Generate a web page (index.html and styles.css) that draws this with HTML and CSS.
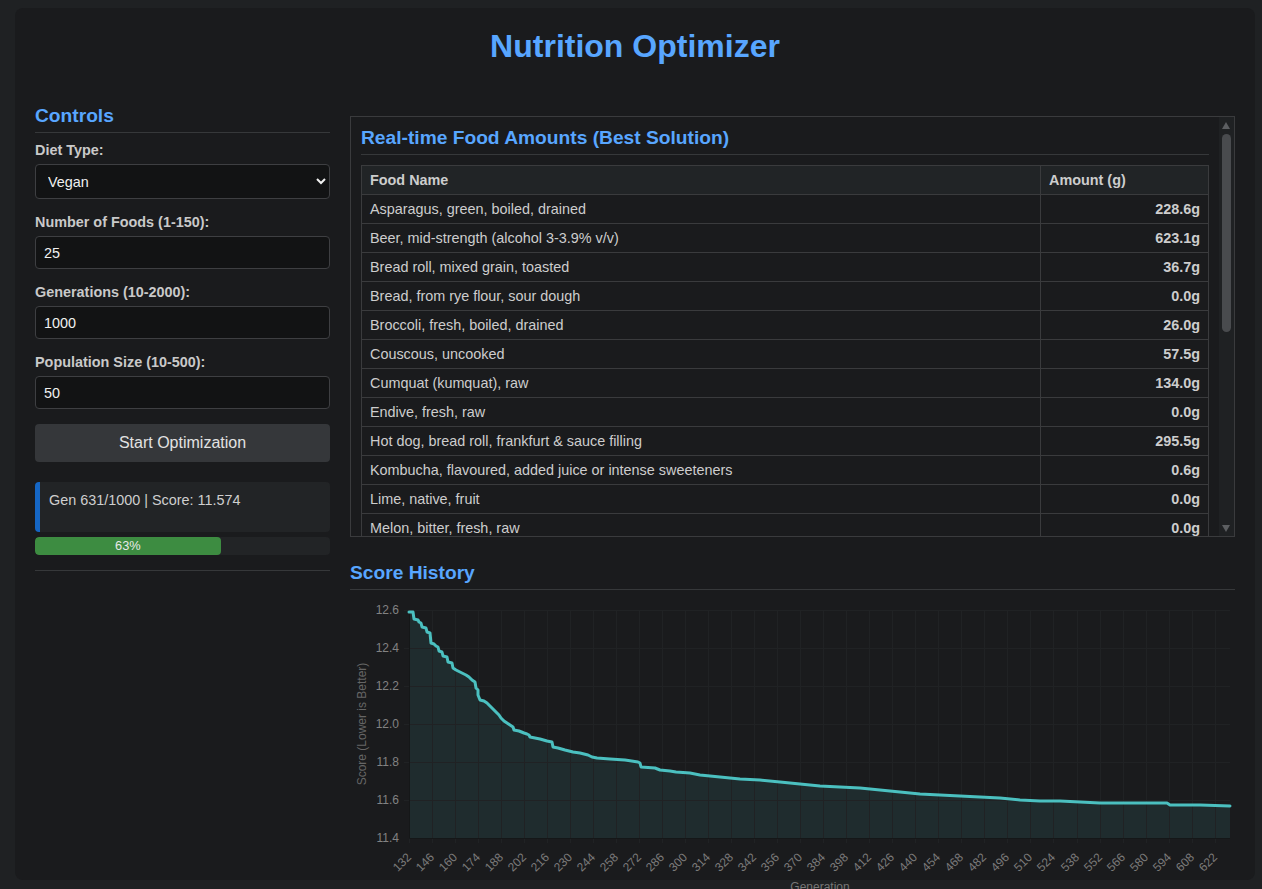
FILE: index.html
```html
<!DOCTYPE html>
<html lang="en">
<head>
<meta charset="utf-8">
<title>Nutrition Optimizer</title>
<link rel="stylesheet" href="styles.css">
</head>
<body>
<div class="app">
  <h1 class="app-title">Nutrition Optimizer</h1>
  <div class="layout">
    <aside class="controls">
      <h2 class="section-title controls-title">Controls</h2>
      <div class="field">
        <label class="field-label" for="diet">Diet Type:</label>
        <select id="diet" class="field-input field-select">
          <option>Vegan</option>
          <option>Vegetarian</option>
          <option>Omnivore</option>
        </select>
      </div>
      <div class="field">
        <label class="field-label" for="foods">Number of Foods (1-150):</label>
        <input id="foods" class="field-input" type="text" value="25">
      </div>
      <div class="field">
        <label class="field-label" for="gens">Generations (10-2000):</label>
        <input id="gens" class="field-input" type="text" value="1000">
      </div>
      <div class="field">
        <label class="field-label" for="pop">Population Size (10-500):</label>
        <input id="pop" class="field-input" type="text" value="50">
      </div>
      <button class="start-btn" type="button">Start Optimization</button>
      <div class="status">Gen 631/1000 | Score: 11.574</div>
      <div class="progress"><div class="progress-fill" style="width:63%">63%</div></div>
    </aside>

    <main class="results">
      <section class="food-panel">
        <h2 class="section-title">Real-time Food Amounts (Best Solution)</h2>
        <table class="food-table">
          <thead>
            <tr><th class="col-name">Food Name</th><th class="col-amount">Amount (g)</th></tr>
          </thead>
          <tbody>
            <tr><td>Asparagus, green, boiled, drained</td><td class="amount">228.6g</td></tr>
            <tr><td>Beer, mid-strength (alcohol 3-3.9% v/v)</td><td class="amount">623.1g</td></tr>
            <tr><td>Bread roll, mixed grain, toasted</td><td class="amount">36.7g</td></tr>
            <tr><td>Bread, from rye flour, sour dough</td><td class="amount">0.0g</td></tr>
            <tr><td>Broccoli, fresh, boiled, drained</td><td class="amount">26.0g</td></tr>
            <tr><td>Couscous, uncooked</td><td class="amount">57.5g</td></tr>
            <tr><td>Cumquat (kumquat), raw</td><td class="amount">134.0g</td></tr>
            <tr><td>Endive, fresh, raw</td><td class="amount">0.0g</td></tr>
            <tr><td>Hot dog, bread roll, frankfurt &amp; sauce filling</td><td class="amount">295.5g</td></tr>
            <tr><td>Kombucha, flavoured, added juice or intense sweeteners</td><td class="amount">0.6g</td></tr>
            <tr><td>Lime, native, fruit</td><td class="amount">0.0g</td></tr>
            <tr><td>Melon, bitter, fresh, raw</td><td class="amount">0.0g</td></tr>
            <tr><td>Mushroom, button, raw</td><td class="amount">0.0g</td></tr>
            <tr><td>Oats, rolled, uncooked</td><td class="amount">88.2g</td></tr>
            <tr><td>Orange juice, commercial</td><td class="amount">0.0g</td></tr>
            <tr><td>Peanut butter, smooth</td><td class="amount">12.4g</td></tr>
            <tr><td>Potato, peeled, boiled</td><td class="amount">145.3g</td></tr>
            <tr><td>Rice, brown, boiled</td><td class="amount">210.8g</td></tr>
            <tr><td>Soy milk, regular fat</td><td class="amount">0.0g</td></tr>
            <tr><td>Spinach, baby, raw</td><td class="amount">64.7g</td></tr>
            <tr><td>Tofu, firm, plain</td><td class="amount">118.9g</td></tr>
            <tr><td>Tomato, common, raw</td><td class="amount">0.0g</td></tr>
            <tr><td>Walnut, raw</td><td class="amount">8.3g</td></tr>
            <tr><td>Wine, red</td><td class="amount">0.0g</td></tr>
            <tr><td>Zucchini, fresh, raw</td><td class="amount">0.0g</td></tr>
          </tbody>
        </table>
        <div class="scrollbar" aria-hidden="true">
          <span class="scroll-arrow scroll-up"></span>
          <span class="scroll-thumb"></span>
          <span class="scroll-arrow scroll-down"></span>
        </div>
      </section>

      <section class="chart-section">
        <h2 class="section-title">Score History</h2>
        <svg class="chart" width="885" height="295" viewBox="350 600 885 295" xmlns="http://www.w3.org/2000/svg">
          <path class="area" d="M409,612 L413,612 L414,619 L418,620 L419,622 L421,623 L422,627 L426,628 L427,632 L430,633 L431,643 L434,644 L436,646 L438,647 L439,651 L442,652 L443,656 L447,657 L448,662 L452,663 L453,668 L456,670 L462,673 L466,675 L469,677 L472,680 L475,682 L476,688 L478,690 L478,695 L480,700 L484,701 L487,703 L490,706 L493,709 L496,712 L499,715 L501,718 L504,721 L507,723 L510,725 L513,727 L514,730 L519,731 L524,733 L527,734 L529,735 L530,737 L535,738 L540,739 L547,741 L552,742 L553,747 L558,748 L565,750 L573,752 L580,753 L588,755 L592,757 L597,758 L610,759 L625,760 L638,762 L640,763 L641,767 L655,768 L660,770 L670,771 L676,772 L690,773 L700,775 L720,777 L740,779 L760,780 L780,782 L800,784 L820,786 L840,787 L860,788 L880,790 L900,792 L920,794 L940,795 L960,796 L980,797 L1000,798 L1020,800 L1040,801 L1060,801 L1080,802 L1100,803 L1130,803 L1167,803 L1170,805 L1200,805 L1230,806 L1230,838 L409,838 Z"/>
          <g class="grid">
            <path d="M409.5,610 V843 M432.5,610 V843 M455.5,610 V843 M478.5,610 V843 M501.5,610 V843 M524.5,610 V843 M547.5,610 V843 M570.5,610 V843 M593.5,610 V843 M616.5,610 V843 M639.5,610 V843 M662.5,610 V843 M685.5,610 V843 M708.5,610 V843 M731.5,610 V843 M754.5,610 V843 M777.5,610 V843 M800.5,610 V843 M823.5,610 V843 M846.5,610 V843 M869.5,610 V843 M892.5,610 V843 M915.5,610 V843 M938.5,610 V843 M961.5,610 V843 M984.5,610 V843 M1007.5,610 V843 M1030.5,610 V843 M1053.5,610 V843 M1077.5,610 V843 M1100.5,610 V843 M1123.5,610 V843 M1146.5,610 V843 M1169.5,610 V843 M1192.5,610 V843 M1215.5,610 V843"/>
            <path d="M404,610.5 H1230 M404,648.5 H1230 M404,686.5 H1230 M404,724.5 H1230 M404,762.5 H1230 M404,800.5 H1230"/>
          </g>
          <path class="axis" d="M409.5,610 V838.5 H1230"/>
          <path class="line" d="M409,612 L413,612 L414,619 L418,620 L419,622 L421,623 L422,627 L426,628 L427,632 L430,633 L431,643 L434,644 L436,646 L438,647 L439,651 L442,652 L443,656 L447,657 L448,662 L452,663 L453,668 L456,670 L462,673 L466,675 L469,677 L472,680 L475,682 L476,688 L478,690 L478,695 L480,700 L484,701 L487,703 L490,706 L493,709 L496,712 L499,715 L501,718 L504,721 L507,723 L510,725 L513,727 L514,730 L519,731 L524,733 L527,734 L529,735 L530,737 L535,738 L540,739 L547,741 L552,742 L553,747 L558,748 L565,750 L573,752 L580,753 L588,755 L592,757 L597,758 L610,759 L625,760 L638,762 L640,763 L641,767 L655,768 L660,770 L670,771 L676,772 L690,773 L700,775 L720,777 L740,779 L760,780 L780,782 L800,784 L820,786 L840,787 L860,788 L880,790 L900,792 L920,794 L940,795 L960,796 L980,797 L1000,798 L1020,800 L1040,801 L1060,801 L1080,802 L1100,803 L1130,803 L1167,803 L1170,805 L1200,805 L1230,806"/>
          <g class="y-ticks">
            <text x="399" y="614">12.6</text>
            <text x="399" y="652">12.4</text>
            <text x="399" y="690">12.2</text>
            <text x="399" y="728">12.0</text>
            <text x="399" y="766">11.8</text>
            <text x="399" y="804">11.6</text>
            <text x="399" y="842">11.4</text>
          </g>
          <text class="axis-title" transform="translate(366,724) rotate(-90)">Score (Lower is Better)</text>
          <g class="x-ticks">
            <text transform="translate(412,858) rotate(-45)">132</text>
            <text transform="translate(435,858) rotate(-45)">146</text>
            <text transform="translate(458,858) rotate(-45)">160</text>
            <text transform="translate(481,858) rotate(-45)">174</text>
            <text transform="translate(504,858) rotate(-45)">188</text>
            <text transform="translate(527,858) rotate(-45)">202</text>
            <text transform="translate(550,858) rotate(-45)">216</text>
            <text transform="translate(573,858) rotate(-45)">230</text>
            <text transform="translate(596,858) rotate(-45)">244</text>
            <text transform="translate(619,858) rotate(-45)">258</text>
            <text transform="translate(642,858) rotate(-45)">272</text>
            <text transform="translate(665,858) rotate(-45)">286</text>
            <text transform="translate(688,858) rotate(-45)">300</text>
            <text transform="translate(711,858) rotate(-45)">314</text>
            <text transform="translate(734,858) rotate(-45)">328</text>
            <text transform="translate(757,858) rotate(-45)">342</text>
            <text transform="translate(780,858) rotate(-45)">356</text>
            <text transform="translate(803,858) rotate(-45)">370</text>
            <text transform="translate(826,858) rotate(-45)">384</text>
            <text transform="translate(849,858) rotate(-45)">398</text>
            <text transform="translate(872,858) rotate(-45)">412</text>
            <text transform="translate(895,858) rotate(-45)">426</text>
            <text transform="translate(918,858) rotate(-45)">440</text>
            <text transform="translate(941,858) rotate(-45)">454</text>
            <text transform="translate(964,858) rotate(-45)">468</text>
            <text transform="translate(987,858) rotate(-45)">482</text>
            <text transform="translate(1010,858) rotate(-45)">496</text>
            <text transform="translate(1033,858) rotate(-45)">510</text>
            <text transform="translate(1056,858) rotate(-45)">524</text>
            <text transform="translate(1080,858) rotate(-45)">538</text>
            <text transform="translate(1103,858) rotate(-45)">552</text>
            <text transform="translate(1126,858) rotate(-45)">566</text>
            <text transform="translate(1149,858) rotate(-45)">580</text>
            <text transform="translate(1172,858) rotate(-45)">594</text>
            <text transform="translate(1195,858) rotate(-45)">608</text>
            <text transform="translate(1218,858) rotate(-45)">622</text>
          </g>
          <text class="axis-title x-title" x="820" y="891">Generation</text>
        </svg>
      </section>
    </main>
  </div>
</div>
</body>
</html>
```

FILE: styles.css
```css
html {
  color-scheme: dark;
  background: #1f2123;
}

body {
  margin: 0;
  padding: 8px 0 30px 15px;
  font-family: "Liberation Sans", Arial, sans-serif;
  font-size: 16px;
  color: #d0d0d0;
  background: #1f2123;
}

.app {
  width: 1240px;
  height: 872px;
  box-sizing: border-box;
  padding: 20px 20px 0;
  background: #1a1b1d;
  border-radius: 8px;
}

.app-title {
  margin: 0 0 40px;
  font-size: 32px;
  line-height: 37px;
  font-weight: bold;
  text-align: center;
  color: #58a6ff;
}

.layout {
  display: grid;
  grid-template-columns: 295px 1fr;
  column-gap: 20px;
  align-items: start;
}

.section-title {
  margin: 0 0 10px;
  padding-bottom: 5px;
  border-bottom: 1px solid #36383a;
  font-size: 19.2px;
  line-height: 22px;
  font-weight: bold;
  color: #58a6ff;
}

.controls-title {
  margin-bottom: 9px;
}

/* Controls */
.controls {
  padding-bottom: 15px;
  border-bottom: 1px solid #36383a;
}

.field {
  margin-bottom: 15px;
}

.field-label {
  display: block;
  margin-bottom: 5px;
  font-size: 14.4px;
  line-height: 17px;
  font-weight: bold;
  color: #c9c9c9;
}

.field-input {
  display: block;
  width: 100%;
  box-sizing: border-box;
  height: 33px;
  padding: 0 8px;
  font-family: "Liberation Sans", Arial, sans-serif;
  font-size: 14.4px;
  color: #f0f0f0;
  background: #121314;
  border: 1px solid #3e3f42;
  border-radius: 4px;
  outline: none;
}

.field-select {
  height: 35px;
  padding: 0 6px 0 8px;
}

.start-btn {
  display: block;
  width: 100%;
  height: 38px;
  margin: 2px 0 0;
  padding: 0;
  font-family: "Liberation Sans", Arial, sans-serif;
  font-size: 16px;
  color: #e2e2e2;
  background: #35373a;
  border: none;
  border-radius: 4px;
}

.status {
  margin-top: 20px;
  height: 50px;
  box-sizing: border-box;
  padding: 10px 14px 0 9px;
  font-size: 14.4px;
  line-height: 17px;
  color: #cfcfcf;
  background: #222426;
  border-left: 5px solid #1566c4;
  border-radius: 4px;
}

.progress {
  margin-top: 5px;
  height: 18px;
  background: #222426;
  border-radius: 4px;
  overflow: hidden;
}

.progress-fill {
  height: 100%;
  background: #3d8c41;
  border-radius: 4px;
  text-align: center;
  font-size: 12.8px;
  line-height: 18px;
  color: #e8e8e8;
}

/* Results */
.results {
  margin-top: 11px;
}

.food-panel {
  position: relative;
  height: 421px;
  box-sizing: border-box;
  padding: 10px 25px 10px 10px;
  border: 1px solid #3a3b3d;
  overflow: hidden;
}

.scrollbar {
  position: absolute;
  top: 0;
  right: 0;
  bottom: 0;
  width: 15px;
  background: #1f2123;
}

.scroll-arrow {
  position: absolute;
  left: 3px;
  width: 0;
  height: 0;
  border-left: 4.5px solid transparent;
  border-right: 4.5px solid transparent;
}

.scroll-up {
  top: 5px;
  border-bottom: 7px solid #5c5e61;
}

.scroll-down {
  bottom: 4px;
  border-top: 7px solid #5c5e61;
}

.scroll-thumb {
  position: absolute;
  left: 3px;
  top: 17px;
  width: 9px;
  height: 198px;
  border-radius: 5px;
  background: #494b4e;
}

.food-table {
  width: 100%;
  border-collapse: collapse;
  border: 1px solid #3a3b3d;
  font-size: 14.4px;
  line-height: 16px;
}

.food-table th,
.food-table td {
  padding: 6px 8px;
  border: 1px solid #3a3b3d;
  text-align: left;
  color: #cdcdcd;
  font-weight: normal;
}

.food-table th {
  font-weight: bold;
  background: #212426;
}

.col-amount {
  width: 151px;
}

.food-table td.amount {
  text-align: right;
  font-weight: bold;
}

.chart-section {
  margin-top: 25px;
}

.chart {
  display: block;
  overflow: visible;
  font-family: "Liberation Sans", Arial, sans-serif;
}

.grid path {
  fill: none;
  stroke: #202224;
  stroke-width: 1;
}

.area {
  fill: rgba(75, 192, 192, 0.1);
}

.axis {
  fill: none;
  stroke: #151718;
  stroke-width: 1;
}

.line {
  fill: none;
  stroke: #4bc0c0;
  stroke-width: 3;
  stroke-linejoin: round;
  stroke-linecap: round;
}

.y-ticks text {
  font-size: 12px;
  fill: #828282;
  text-anchor: end;
}

.x-ticks text {
  font-size: 12px;
  fill: #7a7a7a;
  text-anchor: end;
}

.axis-title {
  font-size: 12px;
  fill: #666;
  text-anchor: middle;
}

.x-title {
  fill: #777;
}
```
